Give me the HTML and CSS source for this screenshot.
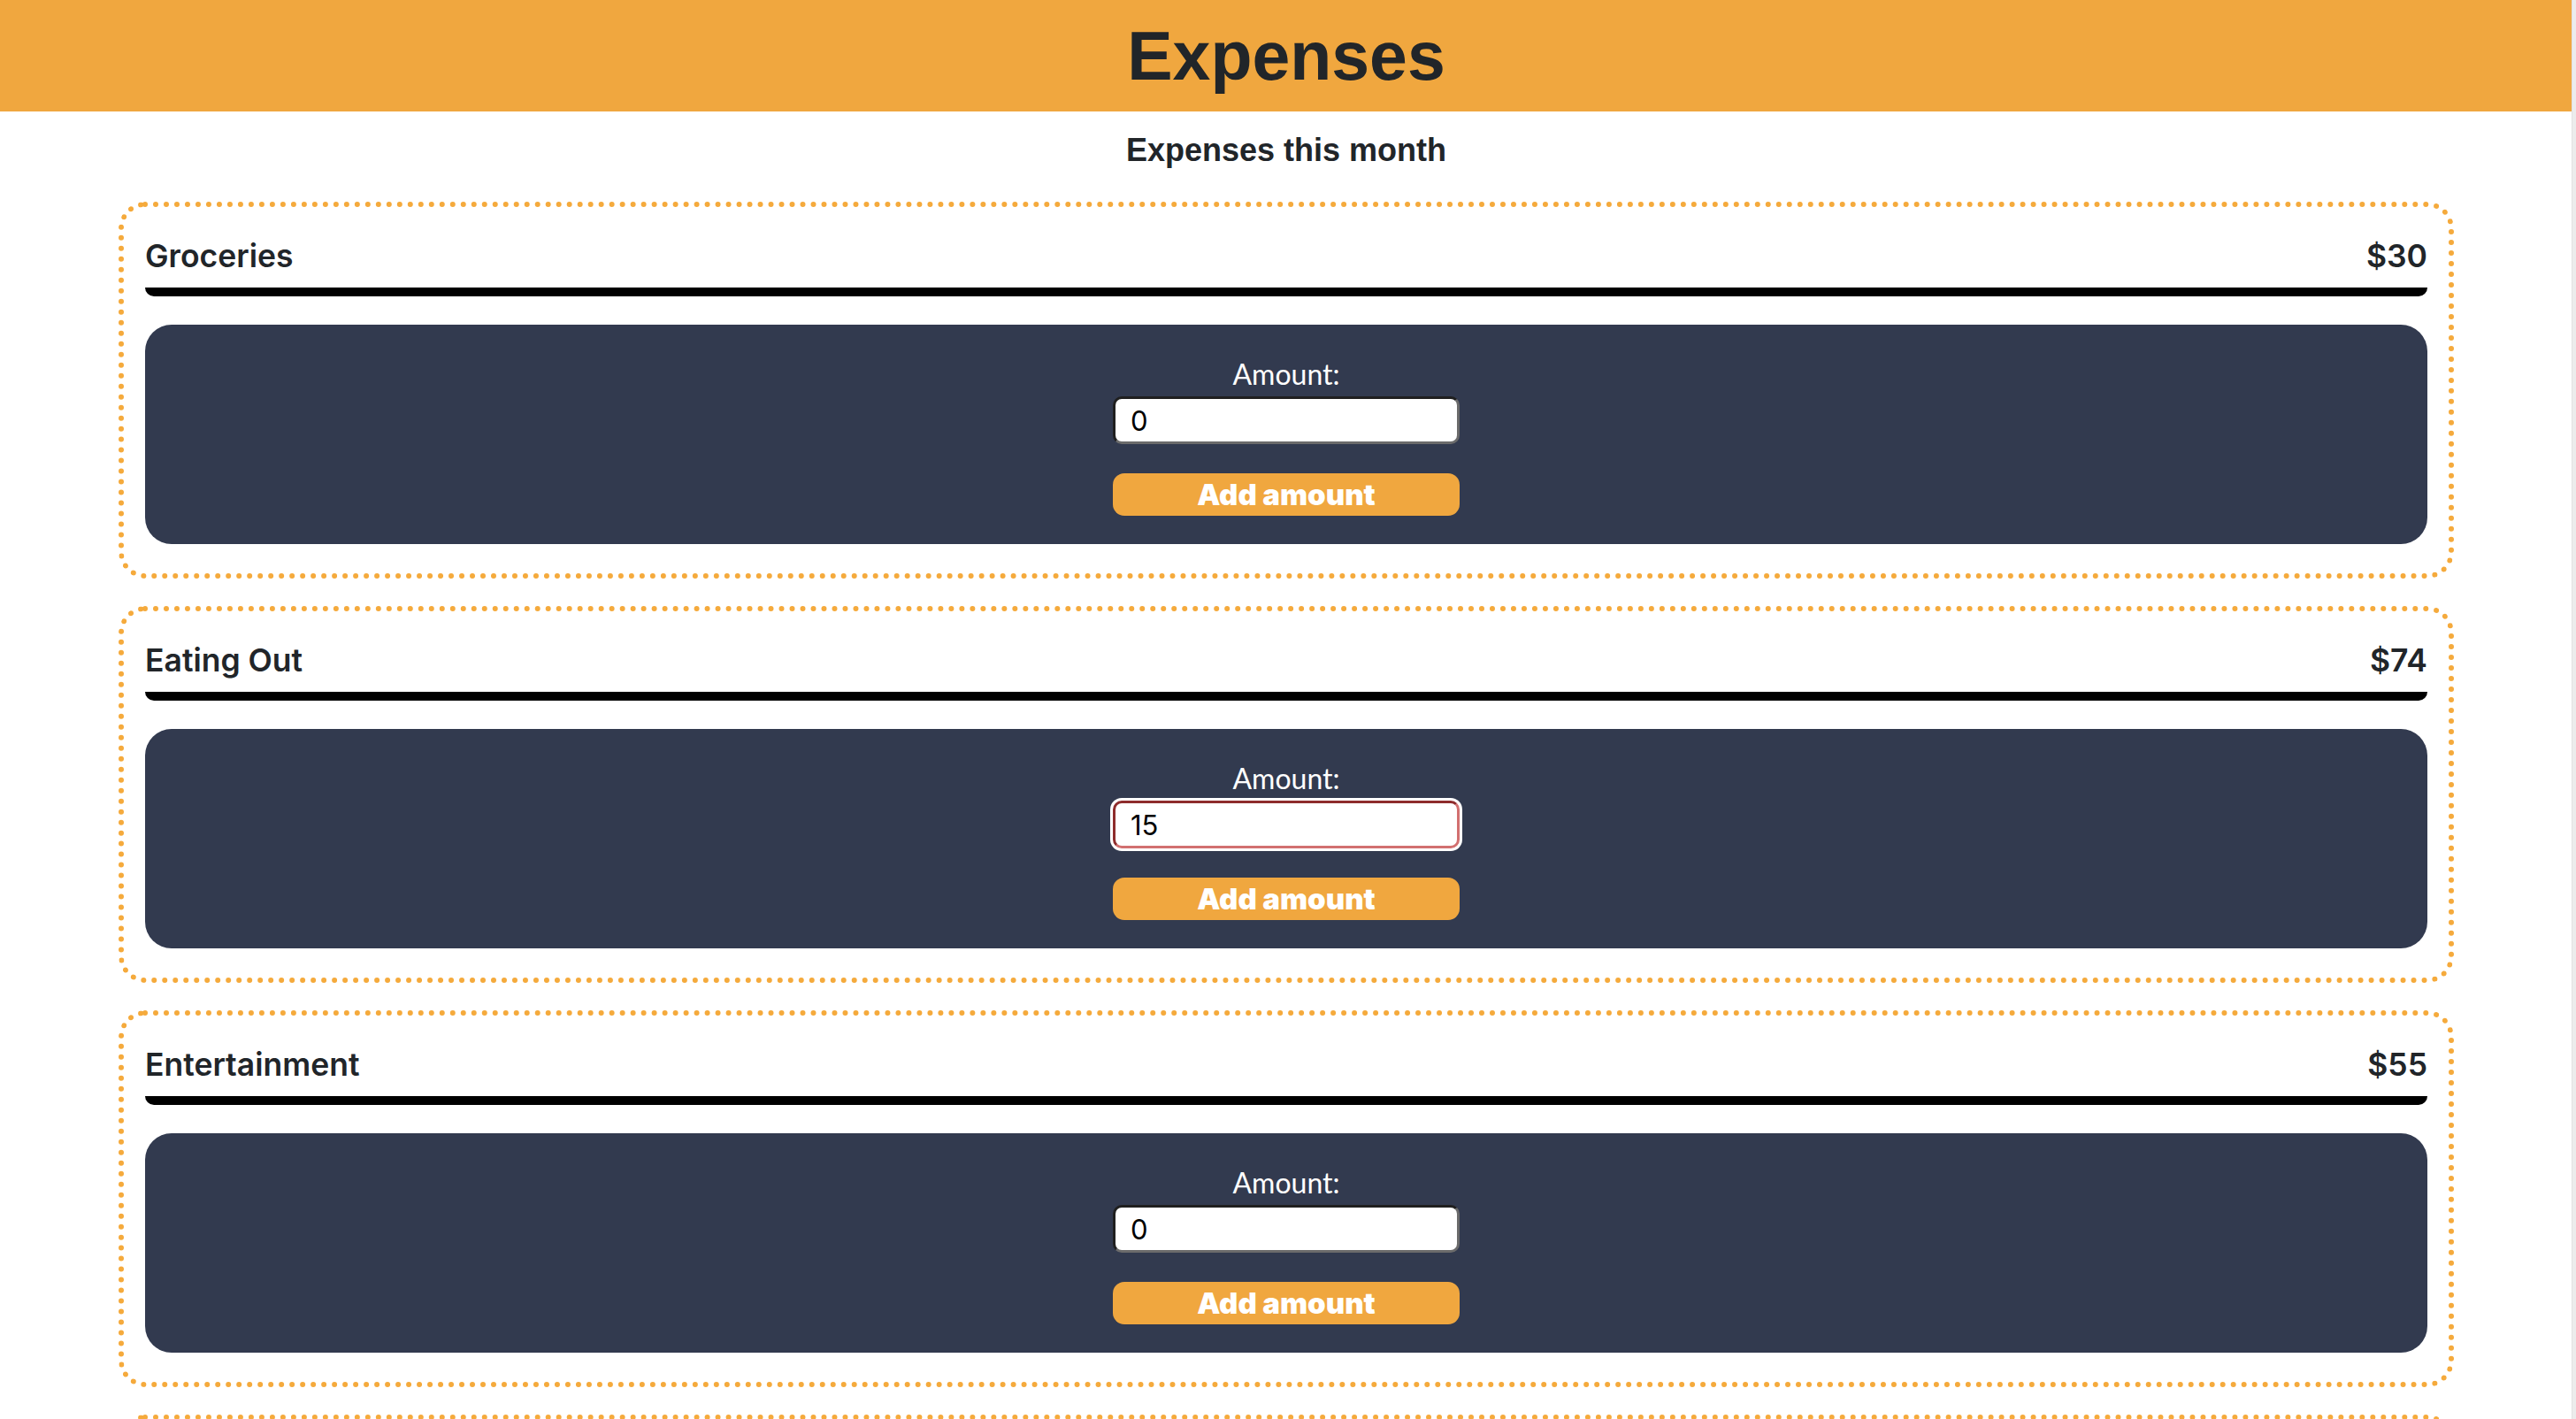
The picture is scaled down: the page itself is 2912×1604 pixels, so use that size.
FILE: index.html
```html
<!DOCTYPE html>
<html lang="en">
<head>
<meta charset="utf-8">
<title>Expenses</title>
<link rel="stylesheet" href="styles.css">
</head>
<body>
<header class="topbar">
  <h1 class="title">Expenses</h1>
</header>
<main class="content">
  <h2 class="subtitle">Expenses this month</h2>

  <section class="card">
    <div class="card-head">
      <h3 class="cat">Groceries</h3>
      <span class="total">$30</span>
    </div>
    <form class="panel">
      <label class="label" for="amt1">Amount:</label>
      <input class="amount" id="amt1" type="text" value="0">
      <button class="add" type="button">Add amount</button>
    </form>
  </section>

  <section class="card">
    <div class="card-head">
      <h3 class="cat">Eating Out</h3>
      <span class="total">$74</span>
    </div>
    <form class="panel">
      <label class="label" for="amt2">Amount:</label>
      <input class="amount amount-focus" id="amt2" type="text" value="15">
      <button class="add" type="button">Add amount</button>
    </form>
  </section>

  <section class="card">
    <div class="card-head">
      <h3 class="cat">Entertainment</h3>
      <span class="total">$55</span>
    </div>
    <form class="panel">
      <label class="label" for="amt3">Amount:</label>
      <input class="amount" id="amt3" type="text" value="0">
      <button class="add" type="button">Add amount</button>
    </form>
  </section>

  <section class="card">
    <div class="card-head">
      <h3 class="cat">Transport</h3>
      <span class="total">$0</span>
    </div>
    <form class="panel">
      <label class="label" for="amt4">Amount:</label>
      <input class="amount" id="amt4" type="text" value="0">
      <button class="add" type="button">Add amount</button>
    </form>
  </section>
</main>
<div class="scrolltrack"></div>
</body>
</html>
```

FILE: styles.css
```css
html {
  overflow: hidden;
  background: #ffffff;
}

body {
  margin: 0 4px 0 0;
  font-family: "Liberation Sans", Arial, sans-serif;
  color: #212529;
  background: #ffffff;
}

.topbar {
  background: #f0a73f;
  height: 126px;
  display: flex;
  align-items: center;
  justify-content: center;
}

.title {
  margin: 0;
  font-family: "Liberation Sans", Arial, sans-serif;
  font-weight: 700;
  font-size: 77px;
  line-height: 126px;
  color: #212529;
}

.content {
  display: flex;
  flex-direction: column;
}

.subtitle {
  margin: 22px 0 36px;
  text-align: center;
  font-family: "Liberation Sans", Arial, sans-serif;
  font-weight: 700;
  font-size: 36px;
  line-height: 44px;
  color: #212529;
}

.card {
  margin: 0 134px 31px;
  border: 6px dotted #f5aa3c;
  border-radius: 30px;
  padding: 34px 24px 33px;
}

.card-head {
  display: flex;
  justify-content: space-between;
  align-items: baseline;
  padding-bottom: 14px;
  border-bottom: 10px solid #000000;
  border-radius: 0 0 10px 10px;
}

.cat,
.total {
  margin: 0;
  font-family: Inter, "Noto Sans", sans-serif;
  font-weight: 600;
  font-size: 35.5px;
  line-height: 43px;
  color: #212529;
}

.panel {
  margin-top: 32px;
  background: #323a4f;
  border-radius: 30px;
  padding: 37px 0 32px;
  display: flex;
  flex-direction: column;
  align-items: center;
}

.label {
  font-family: Lato, "Open Sans", sans-serif;
  font-weight: 400;
  font-size: 32px;
  line-height: 38px;
  color: #ffffff;
}

.amount {
  margin-top: 6px;
  box-sizing: border-box;
  width: 392px;
  height: 54px;
  padding: 0 17px;
  border: 3px solid;
  border-color: #1f1f1f #6b6b6b #6b6b6b #1f1f1f;
  border-radius: 10px;
  background: #ffffff;
  font-family: Inter, "Liberation Sans", sans-serif;
  font-size: 31px;
  color: #000000;
  outline: none;
}

.amount-focus {
  border-color: #8e2c2c #d27070 #d27070 #8e2c2c;
  box-shadow: 0 0 0 3px #ffffff;
}

.add {
  margin-top: 33px;
  width: 392px;
  height: 48px;
  border: none;
  border-radius: 13px;
  background: #f0a73f;
  color: #ffffff;
  font-family: Inter, "Noto Sans", sans-serif;
  font-weight: 900;
  font-size: 33px;
  line-height: 48px;
  padding: 0;
}

.scrolltrack {
  position: fixed;
  top: 0;
  right: 0;
  bottom: 0;
  width: 4px;
  background: #ececec;
  border-left: 1px solid #e2e2e2;
}
```
